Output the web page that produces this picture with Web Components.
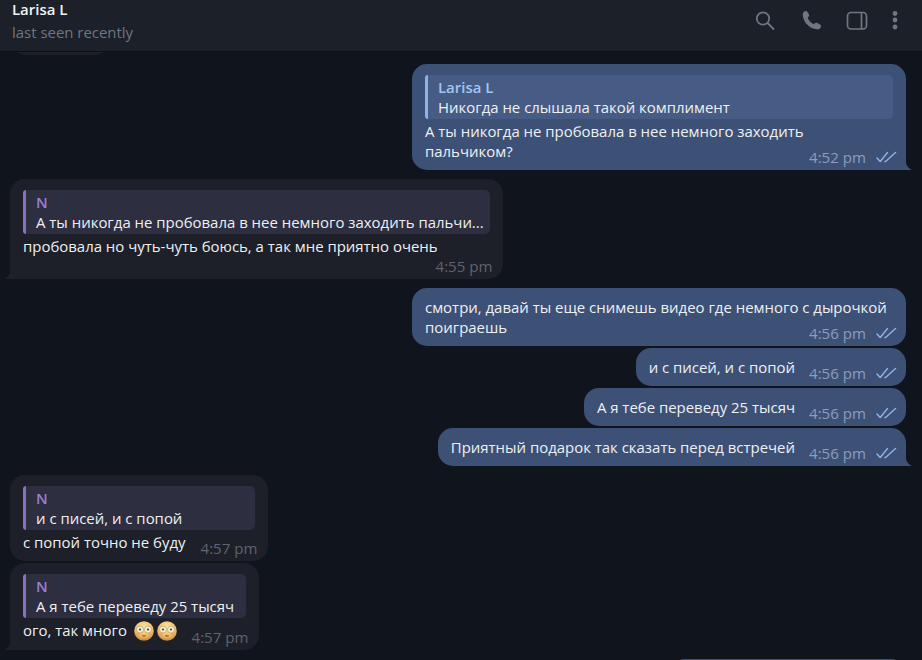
<!DOCTYPE html>
<html><head><meta charset="utf-8">
<style>
html,body{margin:0;padding:0;background:#10141d;}
body{width:922px;height:660px;overflow:hidden;font-family:"Open Sans","Noto Sans",sans-serif;-webkit-font-smoothing:antialiased;}
</style></head><body>
<template id="t-header">
<style>
:host{display:flex;align-items:flex-start;justify-content:space-between;height:51px;background:#1c2029;border-bottom:1px solid #0d1017;flex:none;position:relative;z-index:1}
.who{padding:0 0 0 12px;display:flex;flex-direction:column}
.name{font-size:14.95px;font-weight:600;color:#f0f2f5;line-height:18px}
.st{font-size:14.95px;color:#6f7681;line-height:20px;margin-top:4px}
.icons{display:flex;align-items:center;padding-top:8px;padding-right:23px}
svg{display:block;fill:none;stroke:#70757f;}
</style>
<div class="who"><div class="name">Larisa L</div><div class="st">last seen recently</div></div>
<div class="icons">
<svg width="24" height="24" viewBox="0 0 24 24" stroke-width="1.8" style="margin-right:22px"><circle cx="9" cy="10.500" r="6.200"/><path d="M13.600 15l5.900 6" stroke-linecap="round"/></svg>
<svg width="24" height="24" viewBox="0 0 24 24" style="margin-right:22px;fill:#70757f;stroke:none"><path d="M4.300 3.400c1-.7 2.300-.6 3 .3l1.500 2.400c.6.900.4 1.900-.3 2.600l-.8.800c.6 2.600 3.300 5.700 6.100 6.700l1-.9c.7-.6 1.700-.7 2.500-.2l2.700 1.500c1 .6 1.300 1.800.7 2.900-.7 1.400-2.200 2.100-3.900 1.800C9.400 20.800 3.800 14.600 2.800 7.800c-.3-1.800.3-3.400 1.500-4.400z"/></svg>
<svg width="22" height="24" viewBox="0 0 22 24" stroke-width="1.700" style="margin-right:23px"><rect x="1.500" y="4.500" width="19" height="16.500" rx="3.500"/><path d="M15.500 4.500v16.500"/></svg>
<svg width="8" height="24" viewBox="0 0 8 24" style="fill:#70757f;stroke:none"><circle cx="4" cy="5.500" r="2.400"/><circle cx="4" cy="12" r="2.400"/><circle cx="4" cy="19" r="2.400"/></svg>
</div>
</template>

<template id="t-reply">
<style>
:host{display:block;border-left:3px solid var(--bar);background:var(--rbg);padding:0 10px;height:44px;box-sizing:border-box;white-space:nowrap;overflow:hidden;border-radius:3px 5px 5px 3px}
.n{font-size:14.95px;font-weight:600;color:var(--rname);line-height:20px;margin-top:2px}
.q{font-size:14.95px;color:#eef0f3;line-height:20px;margin-top:0}
</style>
<div class="n"><slot name="who"></slot></div><div class="q"><slot></slot></div>
</template>

<template id="t-bubble">
<style>
:host{display:block;flex:none;box-sizing:border-box;position:relative;border-radius:15px;font-size:14.95px;line-height:20px;color:#eef0f3;padding:9px 13px 9px 13px;width:fit-content}
:host([side=out]){align-self:flex-end;background:#3d5177;margin-right:16px;--bar:#8fb3e4;--rbg:#465c84;--rname:#a3c5f2;--mt:#8b9dbd;--mr:-4px;--ck:#8fb0de}
:host([side=in]){align-self:flex-start;background:#1d2029;margin-left:10px;--bar:#8871bd;--rbg:#2d2e3f;--rname:#9a80d0;--mt:#5f636c;--mr:-2.500px}
:host([tail]){border-bottom-right-radius:0}
:host([side=in][tail]){border-bottom-right-radius:15px;border-bottom-left-radius:0}
.tail{display:none;position:absolute;bottom:0;width:8px;height:11px}
:host([tail]) .tail{display:block}
:host([side=out]) .tail{right:-7px}
:host([side=in]) .tail{left:-7px;transform:scaleX(-1)}
.row{display:flex;align-items:flex-end;justify-content:space-between;gap:14px}
.txt{flex:0 1 auto;white-space:nowrap}
.meta{flex:none;display:flex;align-items:center;gap:10px;font-size:15.100px;color:var(--mt);line-height:20px;position:relative;top:6px;margin-right:var(--mr)}
svg.ck{display:block;stroke:var(--ck);fill:none}
:host([side=in]) svg.ck{display:none}
:host([stack]) .row{display:block}
:host([stack]) .meta{justify-content:flex-end;height:14px;top:3px}
:host([over]) .row{display:block}
:host([over]) .meta{position:absolute;right:13px;bottom:3px;top:auto}
.top{display:none;margin:2px 0 2px}
:host([reply]) .top{display:block}
</style>
<div class="top"><slot name="reply"></slot></div>
<div class="row"><div class="txt"><slot></slot></div>
<div class="meta"><span id="tm"></span><svg class="ck" width="21" height="12" viewBox="0 0 21 12" stroke-width="1.500" stroke-linecap="round" stroke-linejoin="round"><path d="M1 7l3.200 3.500 7.300-9M9 10.500l.6 0L19.500 1.500"/></svg></div></div>
<svg class="tail" viewBox="0 0 8 11"><path d="M0 0v11h8C4 10.500 .6 6 0 0z" fill="currentColor" style="color:var(--tc)"/></svg>
</template>

<template id="t-emoji">
<style>:host{display:inline-block;width:20px;height:20px;vertical-align:-5px;margin-left:3px}svg{display:block}</style>
<svg width="20" height="20" viewBox="0 0 20 20"><defs><radialGradient id="g" cx=".5" cy=".3" r=".75"><stop offset="0" stop-color="#fbe79a"/><stop offset=".65" stop-color="#eebb62"/><stop offset="1" stop-color="#b9773a"/></radialGradient></defs><circle cx="10" cy="10" r="9.800" fill="url(#g)"/><circle cx="6" cy="8.500" r="3.500" fill="#f3ecd0" stroke="#a98a52" stroke-width=".5"/><circle cx="14" cy="8.500" r="3.500" fill="#f3ecd0" stroke="#a98a52" stroke-width=".5"/><circle cx="6" cy="8.500" r="1.100" fill="#5a4228"/><circle cx="14" cy="8.500" r="1.100" fill="#5a4228"/><ellipse cx="10" cy="14.800" rx="2.200" ry=".9" fill="#b86a30"/><circle cx="4" cy="13.200" r="1.800" fill="#ec9a5e" opacity=".6"/><circle cx="16" cy="13.200" r="1.800" fill="#ec9a5e" opacity=".6"/></svg>
</template>

<template id="t-list">
<style>:host{display:flex;flex-direction:column;height:608px;overflow:hidden;position:relative}</style><slot></slot>
</template>

<template id="t-app">
<style>:host{display:flex;flex-direction:column;width:922px;height:660px;overflow:hidden;background:#10141d}</style><slot></slot>
</template>

<script>
const def=(n,t,extra)=>customElements.define(n,class extends HTMLElement{
  constructor(){super();this.attachShadow({mode:"open"}).appendChild(document.getElementById(t).content.cloneNode(true));}
  connectedCallback(){extra&&extra(this)}
});
def("tg-app","t-app");def("tg-header","t-header");def("tg-list","t-list");def("tg-reply","t-reply");def("tg-emoji","t-emoji");
def("tg-bubble","t-bubble",el=>{
  el.shadowRoot.getElementById("tm").textContent=el.getAttribute("time")||"";
  el.style.setProperty("--tc",el.getAttribute("side")=="out"?"#3d5177":"#1d2029");
  if(el.hasAttribute("w"))el.style.width=el.getAttribute("w")+"px";
  if(el.hasAttribute("mt"))el.style.marginTop=el.getAttribute("mt")+"px";
  if(!el.hasAttribute("time"))el.shadowRoot.querySelector(".row").style.display="none";
});
</script>

<tg-app>
<tg-header></tg-header>
<tg-list>
<tg-bubble side="in" w="100" mt="-41" style="height:44px"></tg-bubble>
<tg-bubble side="out" reply tail over time="4:52 pm" w="494" mt="9">
 <tg-reply slot="reply"><span slot="who">Larisa L</span>Никогда не слышала такой комплимент</tg-reply>
 А ты никогда не пробовала в нее немного заходить<br>пальчиком?
</tg-bubble>
<tg-bubble side="in" reply tail stack time="4:55 pm" w="493" mt="9">
 <tg-reply slot="reply"><span slot="who">N</span>А ты никогда не пробовала в нее немного заходить пальчи...</tg-reply>
 пробовала но чуть-чуть боюсь, а так мне приятно очень
</tg-bubble>
<tg-bubble side="out" over time="4:56 pm" w="494" mt="9">смотри, давай ты еще снимешь видео где немного с дырочкой<br>поиграешь</tg-bubble>
<tg-bubble side="out" time="4:56 pm" mt="2">и с писей, и с попой</tg-bubble>
<tg-bubble side="out" time="4:56 pm" mt="2">А я тебе переведу 25 тысяч</tg-bubble>
<tg-bubble side="out" tail time="4:56 pm" mt="2">Приятный подарок так сказать перед встречей</tg-bubble>
<tg-bubble side="in" reply time="4:57 pm" w="258" mt="9">
 <tg-reply slot="reply"><span slot="who">N</span>и с писей, и с попой</tg-reply>
 с попой точно не буду
</tg-bubble>
<tg-bubble side="in" reply tail time="4:57 pm" w="249" mt="2">
 <tg-reply slot="reply"><span slot="who">N</span>А я тебе переведу 25 тысяч</tg-reply>
 ого, так много <tg-emoji></tg-emoji><tg-emoji></tg-emoji>
</tg-bubble>
<tg-bubble side="out" w="236" mt="9" style="height:40px"></tg-bubble>
</tg-list>
</tg-app>
</body></html>
